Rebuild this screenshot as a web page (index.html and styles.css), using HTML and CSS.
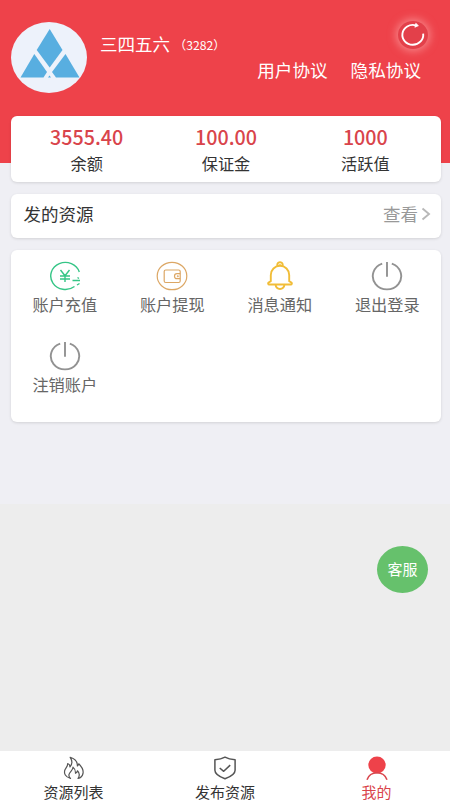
FILE: index.html
```html
<!DOCTYPE html>
<html lang="zh-CN">
<head>
<meta charset="utf-8">
<title>我的</title>
<link rel="stylesheet" href="styles.css">
</head>
<body>
<div class="app">
  <main class="page">
    <header class="header">
      <svg class="avatar" viewBox="0 0 76 71">
        <ellipse cx="38" cy="35.5" rx="38" ry="35.5" fill="#edf2fb"/>
        <g fill="#58aee0">
          <path d="M38.7 7 51.500 28 38.700 45.500 25.700 28Z"/>
          <path d="M23.300 32 36 50 32.500 55.500H9.500Z"/>
          <path d="M54.500 32 68.500 55.500H45L41 50Z"/>
          <path d="M38.500 53.500 40 55.500H37Z"/>
        </g>
      </svg>
      <div class="info">
        <div class="user"><span class="name">三四五六</span><span class="uid">（3282）</span></div>
        <nav class="links"><a>用户协议</a><a>隐私协议</a></nav>
      </div>
      <div class="refresh">
        <svg viewBox="0 0 30 30" fill="none" stroke="#fff" stroke-width="2">
          <path d="M25.900 13.500A11.200 10.600 0 1 1 18 4.700"/>
          <path d="M18 2.500 20.800 5 17 6.700Z" fill="#fff" stroke-width=".8"/>
        </svg>
      </div>
    </header>

    <section class="card stats">
      <div class="stat"><strong>3555.40</strong><span>余额</span></div>
      <div class="stat"><strong>100.00</strong><span>保证金</span></div>
      <div class="stat"><strong>1000</strong><span>活跃值</span></div>
    </section>

    <section class="card row">
      <span>发的资源</span>
      <span class="more">查看<svg viewBox="0 0 10 14" fill="none" stroke="#b8b8b8" stroke-width="1.900"><path d="M1.500 1.500 8 7 1.500 12.500"/></svg></span>
    </section>

    <section class="card menu">
      <div class="item">
        <svg viewBox="0 0 32 30" fill="none" stroke="#35c586" stroke-width="1.400">
          <path d="M30.300 11A14.600 13.500 0 1 0 25.500 25.500M11.500 9l4.500 5.800L20.500 9M16 14.800V21M11 15h10M11 18h10M23.500 19.500h7.500M28.500 16.500l1.500 1M28 24l2.500-1.500"/>
        </svg>
        <span>账户充值</span>
      </div>
      <div class="item">
        <svg viewBox="0 0 32 30" fill="none" stroke="#dca765" stroke-width="1.200">
          <ellipse cx="16" cy="15" rx="14.800" ry="13.700"/>
          <rect x="8.200" y="9" width="16" height="12.500" rx="1.500"/>
          <path d="M24.200 12.700H21a2.500 2.500 0 0 0 0 5h3.200"/>
          <circle cx="21.800" cy="15.200" r=".4"/>
        </svg>
        <span>账户提现</span>
      </div>
      <div class="item">
        <svg viewBox="0 0 32 30" fill="none" stroke="#f1bd38" stroke-width="1.900" stroke-linejoin="round">
          <path d="M13.800 5.200a2.600 2.600 0 1 1 4.400 0M6.800 20.200V14a9.200 9.200 0 0 1 18.400 0v6.200l2 1.200a1.100 1.100 0 0 1-.5 2.100H5.300a1.100 1.100 0 0 1-.5-2.100ZM11.500 23.700c.8 5.700 8.200 5.700 9 0"/>
          <circle cx="16" cy="3.800" r=".8" stroke-width=".8"/>
        </svg>
        <span>消息通知</span>
      </div>
      <div class="item">
        <svg viewBox="0 0 32 30" fill="none" stroke="#929292" stroke-width="1.900">
          <path d="M11.200 2.600A14.200 13.300 0 1 0 20.800 2.600M16 1V15.800"/>
        </svg>
        <span>退出登录</span>
      </div>
      <div class="item">
        <svg viewBox="0 0 32 30" fill="none" stroke="#929292" stroke-width="1.900">
          <path d="M11.200 2.600A14.200 13.300 0 1 0 20.800 2.600M16 1V15.800"/>
        </svg>
        <span>注销账户</span>
      </div>
    </section>
  </main>

  <button class="service">客服</button>

  <nav class="tabs">
    <a class="tab">
      <svg viewBox="0 0 24 24" fill="none" stroke="#555" stroke-width="1.200" stroke-linejoin="round">
        <path d="M8.500 22.500C3.500 21 1.500 17.500 3 13.800c.8-2 2.800-3.300 2.700-6.300 1.500.6 2.300 1.900 2.300 3.400C10.200 8.300 10.300 4.500 8.200 1.300c4.300 1.300 7.300 4.300 7.200 8.700.8-.5 1.200-1.200 1.300-2.200 3 2.900 5 6.200 4.300 9.700-.6 2.600-2.300 4.300-5 5 1.900-2.900 1.700-5.500-.6-7.700-.3 1.300-.9 2-1.900 2.500.1-2.800-.7-4.800-2.500-6.200.2 3.300-3.800 4.700-4.100 7.800-.1 1.400.5 2.600 1.600 3.600Z"/>
      </svg>
      <span>资源列表</span>
    </a>
    <a class="tab">
      <svg viewBox="0 0 24 24" fill="none" stroke="#555" stroke-width="1.500" stroke-linejoin="round">
        <path d="M12 1.200C9 3 5.500 3.600 1.900 3.700v10.500c0 4 4.500 6.500 10.100 8.600 5.600-2.100 10.100-4.600 10.100-8.600V3.700C18.500 3.600 15 3 12 1.200ZM6.700 12l4 3.300 6.500-6.200"/>
      </svg>
      <span>发布资源</span>
    </a>
    <a class="tab active">
      <svg viewBox="0 0 24 24">
        <ellipse cx="12" cy="9" rx="8.700" ry="8.500" fill="#ee424a"/>
        <path d="M2 23.700C3.500 19.500 7 16.700 12 16.700s8.500 2.800 10 7" fill="none" stroke="#d9474e" stroke-width="1.600"/>
      </svg>
      <span>我的</span>
    </a>
  </nav>
</div>
</body>
</html>
```

FILE: styles.css
```css
* { box-sizing: border-box; }

body {
  margin: 0;
  font-family: "Noto Sans CJK SC", sans-serif;
  color: #333;
  background: #ededed;
}

.app {
  height: 800px;
  display: flex;
  flex-direction: column;
  overflow: hidden;
  position: relative;
}

.page {
  height: 504px;
  background: #efeff4;
}

.header {
  height: 163px;
  margin-bottom: -47px;
  padding: 22px 11px 0;
  display: flex;
  position: relative;
  background: #ee424a;
  color: #fff;
}

.avatar { width: 76px; height: 71px; }
.info { flex: 1; margin-left: 13px; padding-top: 8px; }
.user { display: flex; align-items: center; height: 26px; }
.name { font-size: 17.500px; }
.uid { font-size: 12.200px; margin-left: 4px; padding-top: 3px; }
.links {
  display: flex;
  justify-content: flex-end;
  gap: 23px;
  margin-right: 18px;
  font-size: 17.600px;
  line-height: 28px;
}

.refresh {
  position: absolute;
  left: 398px;
  top: 21px;
  width: 30px;
  height: 28px;
  border-radius: 50%;
  background: #e3404a;
  box-shadow: 0 0 9px 2px rgba(255, 190, 190, .55);
}
.refresh svg { display: block; width: 30px; height: 28px; }

.card {
  position: relative;
  margin: 0 9px 12px 11px;
  border-radius: 6px;
  background: #fff;
  box-shadow: 0 1px 3px rgba(0, 0, 0, .12);
}

.stats {
  height: 66px;
  padding: 8px 6px 0;
  display: grid;
  grid-template-columns: repeat(3, 1fr);
}
.stat { display: flex; flex-direction: column; align-items: center; }
.stat strong { font-size: 19.700px; font-weight: 500; line-height: 26px; color: #d9444b; }
.stat span { font-size: 16.200px; line-height: 27px; }

.row {
  height: 44px;
  padding: 0 10px 6px 12.500px;
  display: flex;
  justify-content: space-between;
  align-items: center;
  font-size: 17.500px;
}
.more { display: flex; align-items: center; color: #999; }
.more svg { width: 10px; height: 14px; margin: 2px 0 0 3px; }

.menu {
  height: 172px;
  padding: 11px 0 0;
  display: grid;
  grid-template-columns: repeat(4, 1fr);
  grid-auto-rows: 80px;
}
.item { display: flex; flex-direction: column; align-items: center; }
.item svg { width: 32px; height: 30px; }
.item span { font-size: 16.200px; line-height: 26px; color: #666; }

.service {
  position: absolute;
  left: 377px;
  top: 546px;
  width: 51px;
  height: 47px;
  padding: 0 0 2px;
  border: 0;
  border-radius: 50%;
  background: #66c16c;
  color: #fff;
  font: 15px "Noto Sans CJK SC", sans-serif;
}

.tabs {
  height: 49px;
  margin-top: auto;
  padding-top: 4.500px;
  display: grid;
  grid-template-columns: repeat(3, 151.500px);
  justify-content: center;
  background: #fff;
}
.tab { display: flex; flex-direction: column; align-items: center; }
.tab svg { width: 24px; height: 24px; }
.tab span { font-size: 15px; line-height: 24px; }
.active { color: #d9444b; }
```
